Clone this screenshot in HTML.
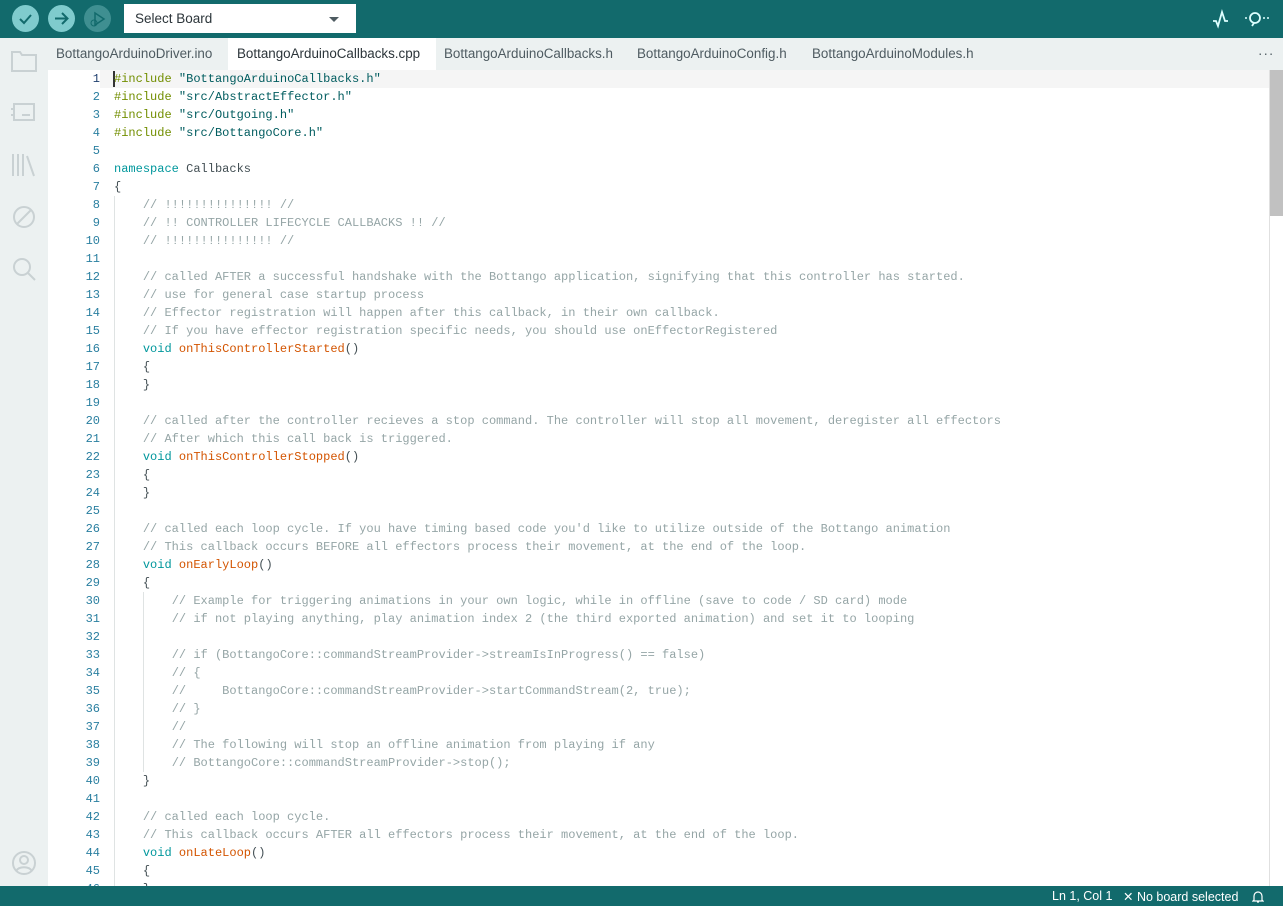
<!DOCTYPE html>
<html><head><meta charset="utf-8"><style>
*{margin:0;padding:0;box-sizing:border-box}
body{width:1283px;height:906px;overflow:hidden;background:#fff;font-family:"Liberation Sans",sans-serif;position:relative}
.top{position:absolute;left:0;top:0;width:1283px;height:38px;background:#126a6c}
.btn{position:absolute;top:5px;width:27px;height:27px;border-radius:50%;background:#7fcbcd}
.sel{position:absolute;left:124px;top:4px;width:232px;height:29px;background:#fff;font-size:13.5px;color:#2c353a;padding:7px 0 0 11px}
.sel:after{content:"";position:absolute;right:17px;top:13px;border-left:5px solid transparent;border-right:5px solid transparent;border-top:5px solid #4e5b61}
.tabs{position:absolute;left:0;top:38px;width:1283px;height:32px;background:#ecf1f1}
.tab{position:absolute;top:0;height:32px;font-size:13.4px;color:#4e5b61;padding-top:8px}
.side{position:absolute;left:0;top:38px;width:48px;height:848px;background:#ecf1f1}
.gut{position:absolute;left:48px;top:70px;width:52px;height:816px;font:12.03px/18px "Liberation Mono",monospace;color:#2a7fa0;text-align:right}
.code{position:absolute;left:114px;top:70px;font:12.03px/18px "Liberation Mono",monospace;color:#434f54;white-space:pre}
.cur{position:absolute;left:100px;top:70px;width:1170px;height:18px;background:#f5f5f5}
.c{color:#95a5a6}.k{color:#00979c}.p{color:#728e00}.s{color:#005c5f}.f{color:#d35400}
.status{position:absolute;left:0;top:886px;width:1283px;height:20px;background:#126a6c;color:#fff;font-size:12.5px}
.scroll{position:absolute;left:1269px;top:70px;width:14px;height:816px;border-left:1px solid #e0e0e0}
.thumb{position:absolute;left:1270px;top:70px;width:13px;height:146px;background:#c1c1c1}
.guide{position:absolute;width:1px;background:#dfe3e3}
</style></head><body>
<div class="top">
<div class="btn" style="left:12px"><svg width="27" height="27"><path d="M8 14l4 4 7-8" stroke="#126a6c" stroke-width="2" fill="none"/></svg></div>
<div class="btn" style="left:48px"><svg width="27" height="27"><path d="M7 13.5h12M14 8l5.5 5.5L14 19" stroke="#126a6c" stroke-width="2" fill="none"/></svg></div>
<div class="btn" style="left:84px;background:#3f8f91"><svg width="27" height="27"><path d="M11 8l9 6-9 6z" stroke="#126a6c" stroke-width="1.5" fill="none"/><circle cx="10" cy="18" r="3" stroke="#126a6c" fill="none"/></svg></div>
<div class="sel">Select Board</div>
<svg style="position:absolute;left:1210px;top:8px" width="22" height="22"><path d="M3 13l3 0 2 5 4-14 3 9h3" stroke="#dff" stroke-width="1.8" fill="none"/></svg>
<svg style="position:absolute;left:1242px;top:8px" width="30" height="22"><circle cx="13" cy="10" r="5" stroke="#dff" stroke-width="1.8" fill="none"/><path d="M12 15l-2 3" stroke="#dff" stroke-width="1.8"/><circle cx="4" cy="10" r="1" fill="#dff"/><circle cx="22" cy="10" r="1" fill="#dff"/><circle cx="26" cy="10" r="1" fill="#dff"/></svg>
</div>
<div class="tabs">
<div class="tab" style="left:56px">BottangoArduinoDriver.ino</div>
<div class="tab" style="left:228px;width:208px;background:#fff;color:#2c353a;padding-left:9px">BottangoArduinoCallbacks.cpp</div>
<div class="tab" style="left:444px">BottangoArduinoCallbacks.h</div>
<div class="tab" style="left:637px">BottangoArduinoConfig.h</div>
<div class="tab" style="left:812px">BottangoArduinoModules.h</div>
<div class="tab" style="left:1258px;letter-spacing:1px">···</div>
</div>
<div class="side">
<svg style="position:absolute;left:0;top:0" width="48" height="260" fill="none" stroke="#c9d1d3" stroke-width="2">
<path d="M12 14h8l2 3h14v16H12z"/>
<path d="M14 66h20v16H14zM11 71h3M11 77h3M22 77h8"/>
<path d="M13 116v22M18 116v22M23 116v22M27 118l7 20"/>
<circle cx="24" cy="179" r="10"/><path d="M17 186l14-14"/>
<circle cx="22" cy="229" r="8"/><path d="M28 235l7 7"/>
</svg>
<svg style="position:absolute;left:11px;top:812px" width="26" height="26" fill="none" stroke="#c9d1d3" stroke-width="2"><circle cx="13" cy="13" r="11"/><circle cx="13" cy="10" r="4"/><path d="M5 21c3-5 13-5 16 0"/></svg>
</div>
<div class="cur"></div>
<div class="guide" style="left:114px;top:196px;height:690px"></div>
<div class="guide" style="left:143px;top:592px;height:180px"></div>
<div class="gut"><span style="color:#1f3f6e">1</span><br>2<br>3<br>4<br>5<br>6<br>7<br>8<br>9<br>10<br>11<br>12<br>13<br>14<br>15<br>16<br>17<br>18<br>19<br>20<br>21<br>22<br>23<br>24<br>25<br>26<br>27<br>28<br>29<br>30<br>31<br>32<br>33<br>34<br>35<br>36<br>37<br>38<br>39<br>40<br>41<br>42<br>43<br>44<br>45<br>46</div>
<div style="position:absolute;left:113px;top:71px;width:2px;height:16px;background:#333"></div>
<div class="code"><span class="p">#include</span> <span class="s">"BottangoArduinoCallbacks.h"</span>
<span class="p">#include</span> <span class="s">"src/AbstractEffector.h"</span>
<span class="p">#include</span> <span class="s">"src/Outgoing.h"</span>
<span class="p">#include</span> <span class="s">"src/BottangoCore.h"</span>

<span class="k">namespace</span> Callbacks
{
    <span class="c">// !!!!!!!!!!!!!!! //</span>
    <span class="c">// !! CONTROLLER LIFECYCLE CALLBACKS !! //</span>
    <span class="c">// !!!!!!!!!!!!!!! //</span>

    <span class="c">// called AFTER a successful handshake with the Bottango application, signifying that this controller has started.</span>
    <span class="c">// use for general case startup process</span>
    <span class="c">// Effector registration will happen after this callback, in their own callback.</span>
    <span class="c">// If you have effector registration specific needs, you should use onEffectorRegistered</span>
    <span class="k">void</span> <span class="f">onThisControllerStarted</span>()
    {
    }

    <span class="c">// called after the controller recieves a stop command. The controller will stop all movement, deregister all effectors</span>
    <span class="c">// After which this call back is triggered.</span>
    <span class="k">void</span> <span class="f">onThisControllerStopped</span>()
    {
    }

    <span class="c">// called each loop cycle. If you have timing based code you'd like to utilize outside of the Bottango animation</span>
    <span class="c">// This callback occurs BEFORE all effectors process their movement, at the end of the loop.</span>
    <span class="k">void</span> <span class="f">onEarlyLoop</span>()
    {
        <span class="c">// Example for triggering animations in your own logic, while in offline (save to code / SD card) mode</span>
        <span class="c">// if not playing anything, play animation index 2 (the third exported animation) and set it to looping</span>

        <span class="c">// if (BottangoCore::commandStreamProvider->streamIsInProgress() == false)</span>
        <span class="c">// {</span>
        <span class="c">//     BottangoCore::commandStreamProvider->startCommandStream(2, true);</span>
        <span class="c">// }</span>
        <span class="c">//</span>
        <span class="c">// The following will stop an offline animation from playing if any</span>
        <span class="c">// BottangoCore::commandStreamProvider->stop();</span>
    }

    <span class="c">// called each loop cycle.</span>
    <span class="c">// This callback occurs AFTER all effectors process their movement, at the end of the loop.</span>
    <span class="k">void</span> <span class="f">onLateLoop</span>()
    {
    }</div>
<div class="scroll"></div><div class="thumb"></div>
<div class="status">
<span style="position:absolute;left:1052px;top:3px">Ln 1, Col 1</span>
<span style="position:absolute;left:1123px;top:3px">✕ No board selected</span>
<svg style="position:absolute;left:1252px;top:4px" width="12" height="13" fill="none" stroke="#fff" stroke-width="1.2"><path d="M2 10V6a4 4 0 018 0v4l1 1H1zM5 12h2"/></svg>
</div>
</body></html>
